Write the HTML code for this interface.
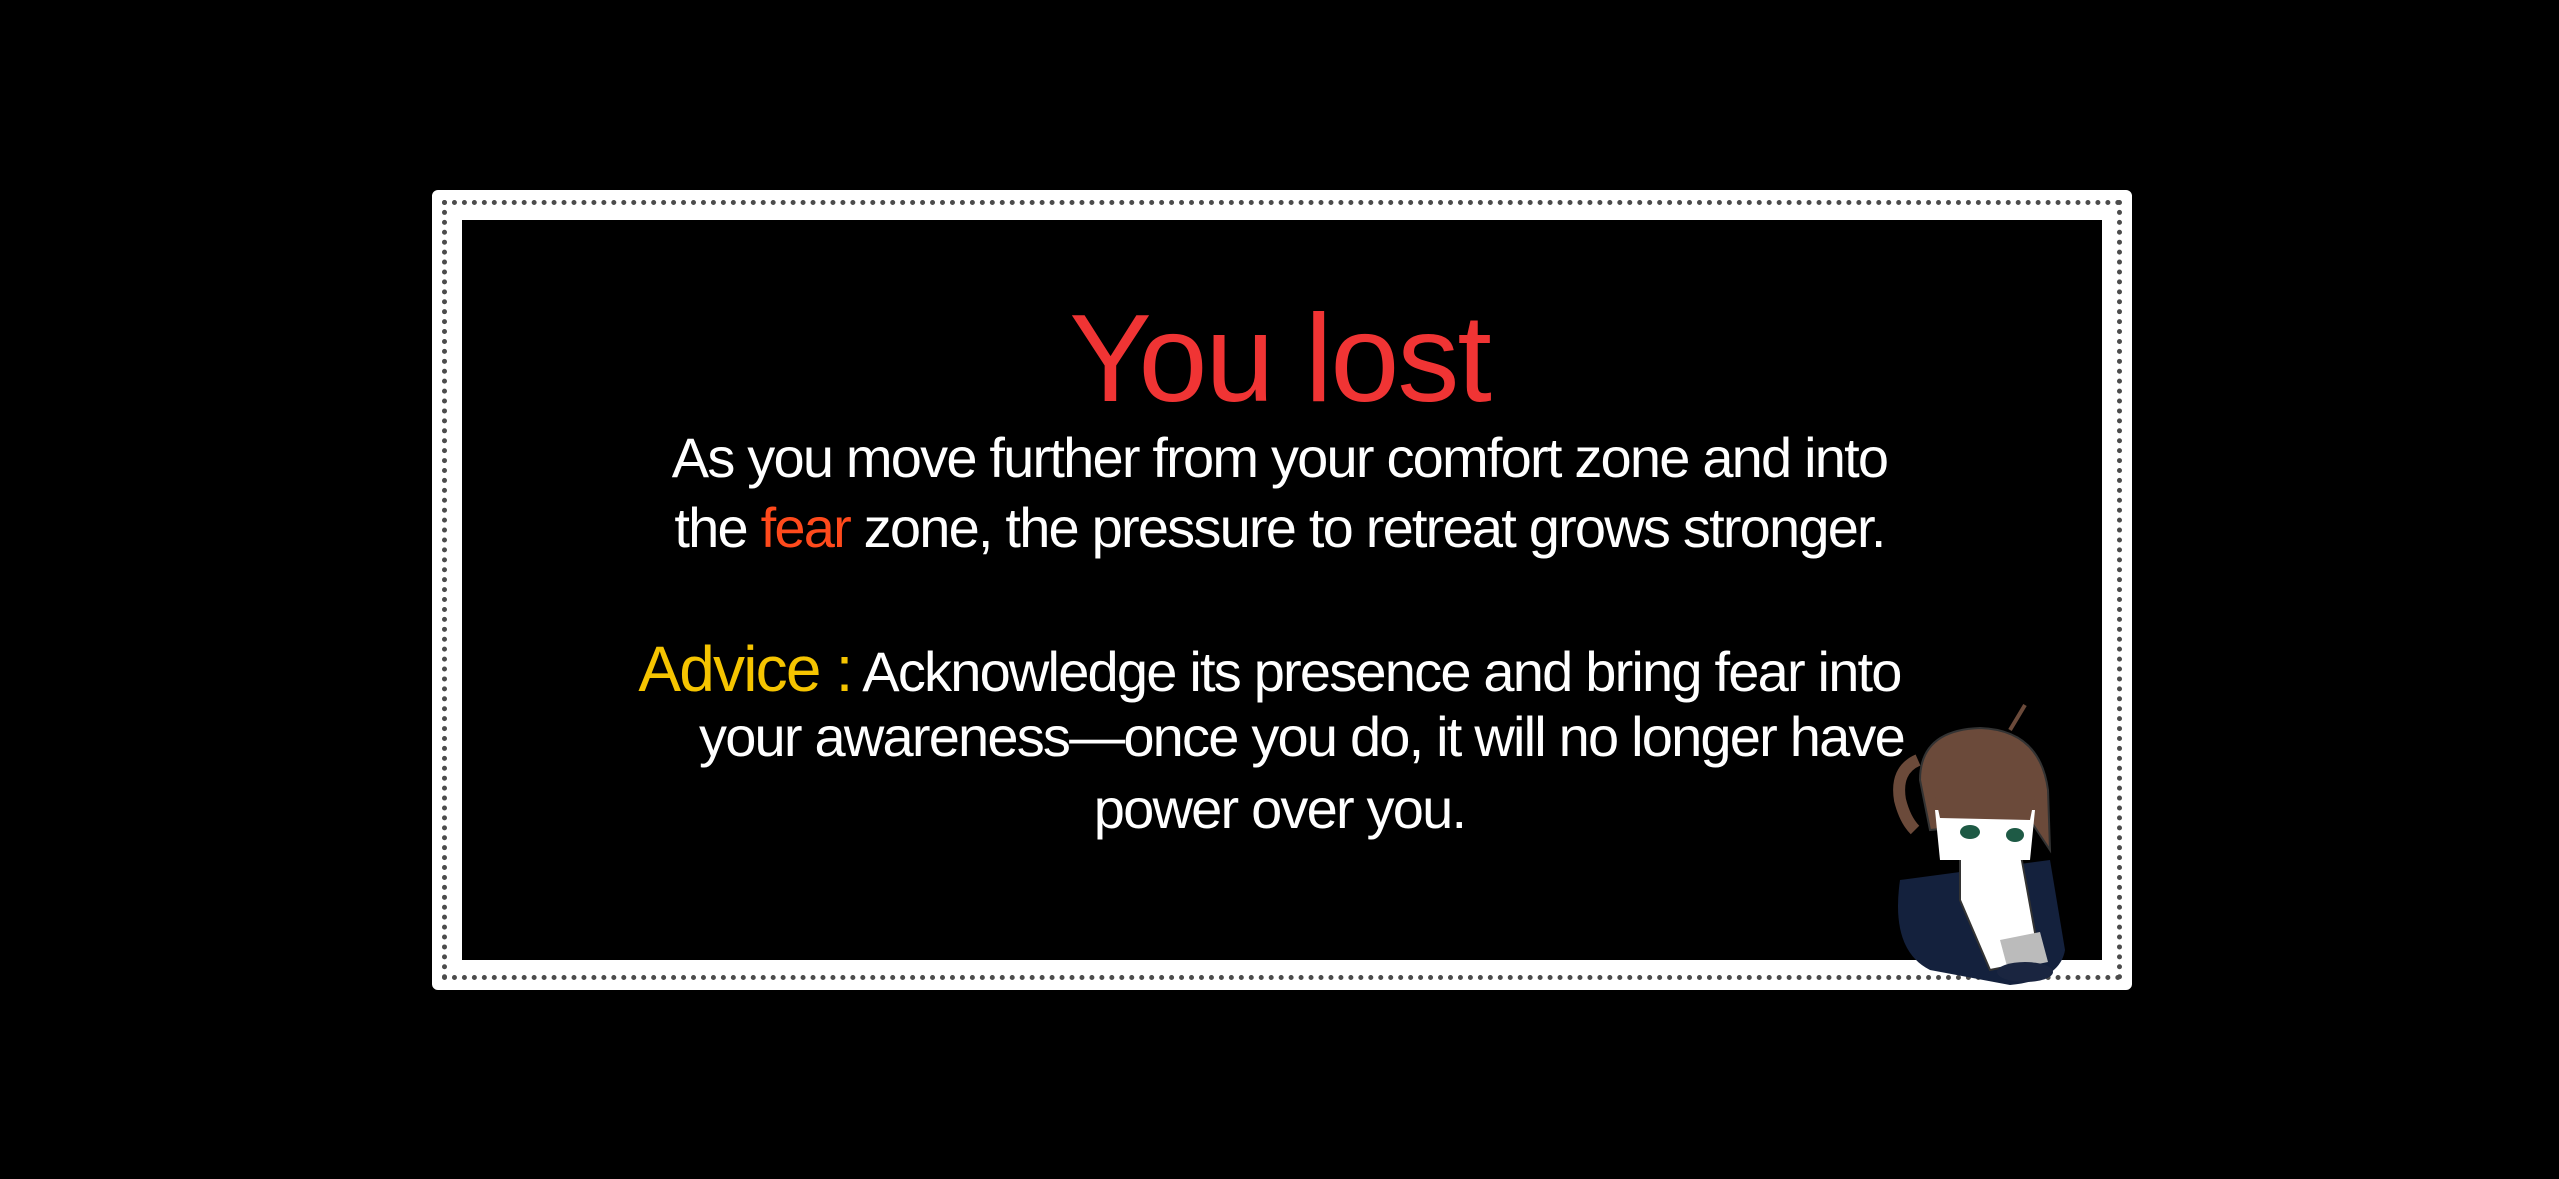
<!DOCTYPE html>
<html><head><meta charset="utf-8"><style>
html,body{margin:0;padding:0;background:#000;width:2559px;height:1179px;overflow:hidden}
.frame{position:absolute;left:432px;top:190px;width:1700px;height:800px;border:30px solid #fff;border-radius:6px;box-sizing:border-box}
.frame2{position:absolute;left:442px;top:200px;width:1680px;height:780px;border:5px dotted #000;box-sizing:border-box;opacity:.7}
.t{position:absolute;left:0;width:2559px;text-align:center;font-family:"Liberation Sans",sans-serif;color:#fff;white-space:nowrap}
.title{top:288px;font-size:124px;color:#f03434;letter-spacing:-2px}
.l{font-size:56px;letter-spacing:-1.8px}
</style></head><body>
<div class="frame"></div><div class="frame2"></div>
<div class="t title">You lost</div>
<div class="t l" style="top:425px">As you move further from your comfort zone and into</div>
<div class="t l" style="top:495px">the <span style="color:#ff4a1c">fear</span> zone, the pressure to retreat grows stronger.</div>
<div class="t l" style="top:632px;left:-10px"><span style="color:#f5c400;font-size:64px">Advice :</span> Acknowledge its presence and bring fear into</div>
<div class="t l" style="top:704px;left:22px">your awareness—once you do, it will no longer have</div>
<div class="t l" style="top:776px">power over you.</div>
<svg style="position:absolute;left:1890px;top:700px" width="200" height="290" viewBox="0 0 200 290">
<path d="M10 180 Q0 250 40 270 L120 285 Q170 280 175 250 L160 160 Z" fill="#14213d"/>
<path d="M70 150 L130 150 L150 260 L100 270 L70 200 Z" fill="#fff" stroke="#333" stroke-width="2"/>
<path d="M110 240 L150 232 L158 262 L118 270 Z" fill="#bbb"/>
<ellipse cx="135" cy="272" rx="28" ry="10" fill="#1a2540"/>
<path d="M30 80 Q30 30 90 28 Q150 30 158 90 L160 150 L140 120 L40 130 Z" fill="#6b4a3a" stroke="#333" stroke-width="2"/>
<path d="M45 110 L145 110 L140 160 L50 160 Z" fill="#fff"/>
<path d="M45 95 L145 95 L140 120 L50 118 Z" fill="#6b4a3a"/>
<ellipse cx="80" cy="132" rx="10" ry="7" fill="#1e5a45"/>
<ellipse cx="125" cy="135" rx="9" ry="7" fill="#1e5a45"/>
<path d="M28 60 Q5 70 10 100 Q15 120 25 130" fill="none" stroke="#6b4a3a" stroke-width="12"/>
<path d="M120 30 L135 5" stroke="#6b4a3a" stroke-width="4"/>
</svg>
</body></html>
